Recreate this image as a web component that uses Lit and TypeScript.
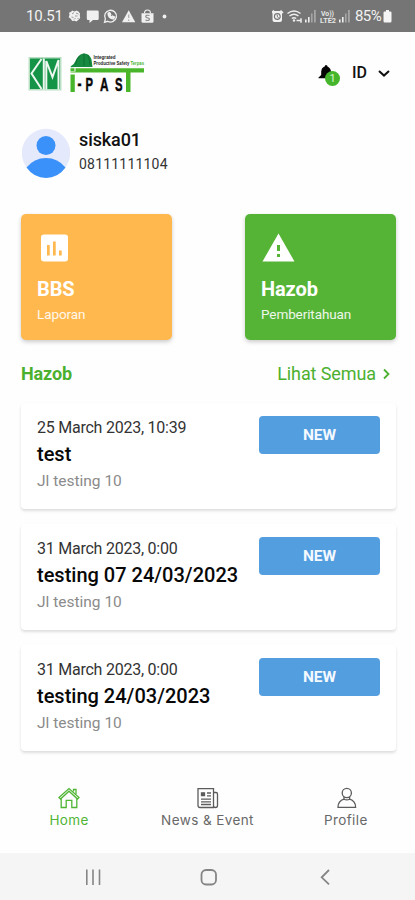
import { LitElement, html, css, svg } from "lit";
import { customElement, property } from "lit/decorators.js";

interface Report {
  date: string;
  title: string;
  place: string;
  status: string;
}

const REPORTS: Report[] = [
  { date: "25 March 2023, 10:39", title: "test", place: "Jl testing 10", status: "NEW" },
  { date: "31 March 2023, 0:00", title: "testing 07 24/03/2023", place: "Jl testing 10", status: "NEW" },
  { date: "31 March 2023, 0:00", title: "testing 24/03/2023", place: "Jl testing 10", status: "NEW" },
];

const signal = (x: number) => svg`
  <path d="M${x} 14.5h1.6v3h-1.6z M${x + 3} 12h1.6v5.500h-1.600z" fill="#eee"/>
  <path d="M${x + 6} 8.500h1.600v9h-1.600z M${x + 9} 5h1.800v12.500h-1.800z" fill="#a6a6a6"/>`;

@customElement("status-bar")
class StatusBar extends LitElement {
  static styles = css`
    :host { display: flex; height: 32px; background: #757575; color: #f2f2f2; align-items: center;
      justify-content: space-between; box-sizing: border-box; padding: 0 22px 0 26px; }
    .group { display: flex; align-items: center; height: 32px; }
    .time { font-size: 15px; line-height: 32px; width: 42px; letter-spacing: -0.2px; white-space: nowrap; }
    .battery { font-size: 15px; line-height: 32px; letter-spacing: -0.6px; width: 27px; margin-left: -3px; margin-right: 1px; white-space: nowrap; }
    svg { display: block; }
    .lte { font: 700 7px Roboto, sans-serif; }
  `;
  render() {
    return html`
      <div class="group">
        <span class="time">10.51</span>
        <svg width="102" height="22" viewBox="0 0 102 22" fill="#f0f0f0">
          <path d="M4 5.500l2.500 1 2-1 2 1 1.500 2-.2 2 .4 2.500-2 2-1.700 1.500-2-.8-2.300.3-1.500-2.200-2-1.500.8-2.500-.5-2 2.200-1z" />
          <path d="M4 9l2-1.500M8 8l2.500 1M3.500 12l2 .5M7 11h2.500M6 14.500l1.500-1.500M9.500 14l1-1" stroke="#9a9a9a" />
          <path d="M19 5.500h10.500q1.200 0 1.200 1.200v7q0 1.200-1.200 1.200H25L21.500 18v-3.100H20q-1.200 0-1.200-1.200v-7z" />
          <g fill="none" stroke="#f0f0f0">
            <path stroke-width="1.300" d="M36.500 17.300l.9-3.300a5.900 5.900 0 1 1 2.300 2.300z" />
            <path stroke-width="1.800" d="M40.300 8.400q.2 4.800 5 5.300l1-1.500-1.800-.8-.9.900q-1.300-.6-1.900-1.900l.8-.9-.9-1.600z" />
          </g>
          <path d="M60.700 5.300L67.300 17.300H54z" />
          <path d="M60.700 9.500v3.600M60.700 14.500v1.400" stroke="#aaa" stroke-width="1.200" />
          <path d="M73.500 8.300h12v8.200q0 1.300-1.300 1.300h-9.400q-1.300 0-1.300-1.300z" />
          <path d="M76.500 8.300q0-3.300 3-3.300t3 3.300" fill="none" stroke="#f0f0f0" stroke-width="1.200" />
          <path d="M81.500 10.500q-3.800-.8-3.800 1.100 0 1 1.900 1.300 1.900.4 1.900 1.400 0 1.800-4 .9" fill="none" stroke="#8c8c8c" stroke-width="1.200" />
          <circle cx="96.500" cy="11.500" r="1.900" />
        </svg>
      </div>
      <div class="group">
        <svg width="86" height="22" viewBox="0 0 86 22">
          <g transform="translate(-2 0)">
            <rect x="1.500" y="6" width="9.500" height="11" rx="2" fill="#f2f2f2" transform="translate(1 0)" />
            <path d="M1.500 8L4 5.500M10.500 5.500L13 8" stroke="#f2f2f2" stroke-width="1.600" />
            <circle cx="7.300" cy="11.500" r="2.900" fill="none" stroke="#757575" stroke-width="1.100" />
            <path d="M7.300 9.800v2l1.300.8" fill="none" stroke="#757575" />
          </g>
          <g fill="none" stroke="#eee" stroke-width="1.500" transform="translate(-2 0)">
            <path d="M17.500 8.500q6.500-5 13 0M19.500 11q4.500-3.500 9 0M21.800 13.500q2.200-1.700 4.400 0" />
            <path d="M26.500 15.500h5M31 13.200v4.500" />
          </g>
          <circle cx="22" cy="15.500" r="1.200" fill="#eee" />
          ${signal(33)}
          <g class="lte" fill="#e6e6e6">
            <text x="49" y="11.200" textLength="13" lengthAdjust="spacingAndGlyphs">Vo))</text>
            <text x="48" y="17.600" textLength="16" lengthAdjust="spacingAndGlyphs">LTE2</text>
          </g>
          ${signal(67)}
        </svg>
        <span class="battery">85%</span>
        <svg width="10" height="22" viewBox="0 0 10 22" fill="#f5f5f5">
          <path d="M3 5h3v1.500h1.300q1.200 0 1.200 1.200v8.600q0 1.200-1.200 1.200H1.700Q.5 17.500.5 16.300V7.700q0-1.200 1.200-1.200H3z" />
        </svg>
      </div>`;
  }
}

@customElement("brand-header")
class BrandHeader extends LitElement {
  static styles = css`
    :host { display: flex; height: 84px; padding: 0 23px 0 28px; box-sizing: border-box; }
    svg { display: block; }
    .logo { margin-top: 20px; }
    .tiny { font: 700 4.600px "Liberation Sans", sans-serif; }
    .past { font: 700 18.500px "Liberation Sans", sans-serif; stroke: #080808; stroke-width: 0.5px; }
    .right { display: flex; margin-left: auto; height: 84px; }
    .bell { position: relative; width: 22px; height: 24px; margin-top: 33px; margin-right: -1px; }
    .badge { position: absolute; left: 7px; top: 6px; width: 15px; height: 15px; border-radius: 50%;
      background: #45b52c; color: #d9f5d0; font-size: 11px; line-height: 15px; text-align: center; }
    .lang { font-size: 16px; line-height: 20px; font-weight: 500; margin: 31px 0 0 13px; color: #111; width: 24px; }
    .chev { margin-top: 37px; }
  `;
  render() {
    return html`
      <svg class="logo" width="118" height="43" viewBox="0 0 118 43">
        <rect x=".5" y="5" width="33" height="33.500" fill="#b9dfc4" />
        <rect x="2" y="6.500" width="30" height="30.500" fill="#159447" />
        <g fill="none" stroke="#eef8f0" stroke-width="2">
          <path d="M13.500 7L3.500 21.500 13.500 37M15.800 6.500v31" />
          <path d="M18.300 37.500V9L24.500 25 30.500 8v29.500" />
        </g>
        <path d="M42.500 14.500q3.500-1.500 5-5.500Q50 2.500 55.500 1.500q6-.5 8 6l1 7.500H47l-4 .3z" fill="#168a40" />
        <path d="M52 3.500q-4 4-4.500 9M56 1.500v12M59.500 3q2.500 4 2.500 10" fill="none" stroke="#0c6b30" stroke-width=".8" />
        <g class="tiny">
          <text x="65.500" y="7.300" fill="#222" textLength="22" lengthAdjust="spacingAndGlyphs">Integrated</text>
          <text x="65.500" y="13" fill="#222" textLength="50.500" lengthAdjust="spacingAndGlyphs">Productive Safety <tspan fill="#48b531">Terpas</tspan></text>
        </g>
        <path d="M42.500 16.200h4v2.700h-4z M47.500 16.200H116v4.200H42.500v-1H47.500z M42.500 22.500h4.300V40h-4.300z M98 19h4.500v21H98z" fill="#49b52b" />
        <g class="past" fill="#080808">
          <text x="49.500" y="37.500" textLength="4" lengthAdjust="spacingAndGlyphs">-</text>
          <text x="57.500" y="38.500" textLength="7.500" lengthAdjust="spacingAndGlyphs">P</text>
          <text x="72" y="38.500" textLength="8.500" lengthAdjust="spacingAndGlyphs">A</text>
          <text x="87" y="38.500" textLength="7.500" lengthAdjust="spacingAndGlyphs">S</text>
        </g>
      </svg>
      <div class="right">
        <div class="bell">
          <svg width="16" height="16" viewBox="0 0 16 16"><path d="M8 0q1.500 0 1.500 1.500Q13 3 13 7v3l2 2.500v.8H.5v-.8L3.200 10V6.500Q3.500 2.500 6.700 1.500 6.700 0 8 0z" fill="#050505" /></svg>
          <span class="badge">1</span>
        </div>
        <span class="lang">ID</span>
        <svg class="chev" width="16" height="10" viewBox="0 0 16 10"><path d="M3 2l5 4.600L13 2" fill="none" stroke="#111" stroke-width="2" /></svg>
      </div>`;
  }
}

@customElement("report-card")
class ReportCard extends LitElement {
  @property({ attribute: false }) report!: Report;
  static styles = css`
    :host { display: flex; justify-content: space-between; height: 106px; box-sizing: border-box; background: #fff;
      padding: 13px 16px 0; border-radius: 4px; box-shadow: 0 2px 3px rgba(0, 0, 0, 0.13); }
    .date { font-size: 16px; line-height: 22px; color: #333; letter-spacing: -0.24px; }
    .title { font-size: 20px; line-height: 31px; font-weight: 500; color: #080808; white-space: nowrap; }
    .place { font-size: 15.500px; line-height: 22px; color: #8b8b8b; }
    .text { width: 210px; padding-top: 1px; }
    .status { width: 121px; height: 38px; border-radius: 4px; background: #529edf; color: #f4f9ff; font-size: 15.500px;
      line-height: 38px; font-weight: 700; text-align: center; }
  `;
  render() {
    const r = this.report;
    return html`
      <div class="text">
        <div class="date">${r.date}</div>
        <div class="title">${r.title}</div>
        <div class="place">${r.place}</div>
      </div>
      <div class="status">${r.status}</div>`;
  }
}

@customElement("app-root")
class AppRoot extends LitElement {
  static styles = css`
    :host { display: flex; flex-direction: column; width: 415px; height: 900px; background: #fefefe; overflow: hidden;
      font-family: Roboto, sans-serif; color: #111; }
    svg { display: block; }
    .user { display: flex; height: 98px; padding: 12px 0 0 22px; box-sizing: border-box; gap: 9px; flex: none; }
    .name { font-size: 18px; line-height: 24px; font-weight: 500; letter-spacing: -0.1px; }
    .phone { font-size: 14px; line-height: 25px; color: #333; letter-spacing: 0.2px; }
    .tiles { display: flex; justify-content: space-between; padding: 0 19px 0 21px; flex: none; }
    .tile { width: 151px; height: 126px; border-radius: 5px; box-sizing: border-box; padding: 17px 16px 0; color: #fff;
      box-shadow: 0 2px 4px rgba(0, 0, 0, 0.2); }
    .bbs { background: #ffb84d; }
    .hazob { background: #55b435; }
    .label { font-size: 20px; line-height: 26px; font-weight: 700; margin-top: 11px; letter-spacing: -0.1px; }
    .sub { font-size: 13.500px; line-height: 22px; margin-top: 1px; opacity: 0.9; letter-spacing: -0.1px; }
    .section { display: flex; align-items: center; height: 63px; padding: 4px 24px 0 21px; box-sizing: border-box; color: #4cb02f; flex: none; }
    .heading { font-size: 18px; font-weight: 700; letter-spacing: -0.15px; }
    .more { font-size: 18px; margin-left: auto; margin-right: 6px; letter-spacing: -0.1px; }
    .list { display: flex; flex-direction: column; gap: 15px; padding: 0 19px 0 21px; flex: none; }
    .tabs { display: flex; justify-content: space-between; height: 102px; box-sizing: border-box; padding: 36px 0 0; flex: none; }
    .tab { width: 138.300px; display: flex; flex-direction: column; align-items: center; font-family: Inter, sans-serif;
      font-size: 13.500px; line-height: 20px; color: #686868; gap: 1px; font-weight: 400; letter-spacing: 0.4px; }
    .tab.on { color: #50b535; }
    .system { height: 47px; background: #f5f5f5; display: flex; align-items: center; justify-content: center; flex: none; }
  `;
  render() {
    return html`
      <status-bar></status-bar>
      <brand-header></brand-header>
      <div class="user">
        <svg width="48" height="50" viewBox="0 0 48 50">
          <circle cx="24" cy="25" r="24.200" fill="#e5e9fc" />
          <circle cx="24" cy="17.500" r="9.500" fill="#3b91fa" />
          <path d="M4.500 39.500Q12 30 24 30t19.500 9.500Q36 50 24 50T4.500 39.500z" fill="#3b91fa" />
        </svg>
        <div><div class="name">siska01</div><div class="phone">08111111104</div></div>
      </div>
      <div class="tiles">
        <div class="tile bbs">
          <svg width="34" height="34" viewBox="0 0 34 34">
            <rect x="4" y="3.500" width="27" height="27" rx="3" fill="#fff" />
            <path d="M10 14h2.700v10.500H10z M16 10.500h2.700v14H16z M22 19.500h2.700v5H22z" fill="#ffb84d" />
          </svg>
          <div class="label">BBS</div><div class="sub">Laporan</div>
        </div>
        <div class="tile hazob">
          <svg width="34" height="34" viewBox="0 0 34 34">
            <path d="M17.500 2.500L33.500 30.500H1.500z" fill="#fff" />
            <path d="M16 14h3v6h-3z M16 23h3v3h-3z" fill="#55b435" />
          </svg>
          <div class="label">Hazob</div><div class="sub">Pemberitahuan</div>
        </div>
      </div>
      <div class="section">
        <span class="heading">Hazob</span><span class="more">Lihat Semua</span>
        <svg width="9" height="12" viewBox="0 0 9 12"><path d="M2 1.500L6.500 6 2 10.500" fill="none" stroke="#4cb02f" stroke-width="1.800" /></svg>
      </div>
      <div class="list">${REPORTS.map((r) => html`<report-card .report=${r}></report-card>`)}</div>
      <div class="tabs">
        <div class="tab on">
          <svg width="24" height="22" viewBox="0 0 24 22" fill="none" stroke="#50b535" stroke-width="1.300">
            <path d="M2 10.500L12 1.500l10 9-1.500 1.500L12 4.200 3.500 12z" /><path d="M4.200 11.500v9h5v-7.200h5.600v7.200h5v-9M16.500 4.500V2.500H19v4.600" />
          </svg>
          <span>Home</span>
        </div>
        <div class="tab">
          <svg width="24" height="22" viewBox="-1 0 24 22" fill="none" stroke="#5c5c5c" stroke-width="1.300">
            <path d="M17.500 20.500H4q-2 0-2-2V1.700h15.500zM17.500 5.500H20q1.500 0 1.500 1.500v11.500q0 2-2 2t-2-2" />
            <path d="M11 6h4M11 8.800h4M5 12.200h10M5 14.900h10M5 17.500h10" /><path d="M5.500 5.800h3v2.700h-3z" fill="#5c5c5c" />
          </svg>
          <span>News &amp; Event</span>
        </div>
        <div class="tab">
          <svg width="24" height="22" viewBox="-.5 0 24 22" fill="none" stroke="#5c5c5c" stroke-width="1.300">
            <circle cx="12.300" cy="6" r="4.600" /><path d="M9.500 9.800v2.400Q3.500 14 3.500 20.300h17.600q0-6.300-6-8.100V9.800M9.500 12.200q2.800 1.500 5.600 0" />
          </svg>
          <span>Profile</span>
        </div>
      </div>
      <div class="system">
        <svg width="415" height="47" viewBox="0 0 415 47" fill="none" stroke="#858585" stroke-width="1.800">
          <path d="M86.800 16.500v15.500M93 16.500v15.500M99.500 16.500v15.500" stroke-width="1.600" />
          <rect x="201.500" y="17" width="14.500" height="14.500" rx="4.500" />
          <path d="M329 17l-7.300 7.300 7.300 7" />
        </svg>
      </div>`;
  }
}
